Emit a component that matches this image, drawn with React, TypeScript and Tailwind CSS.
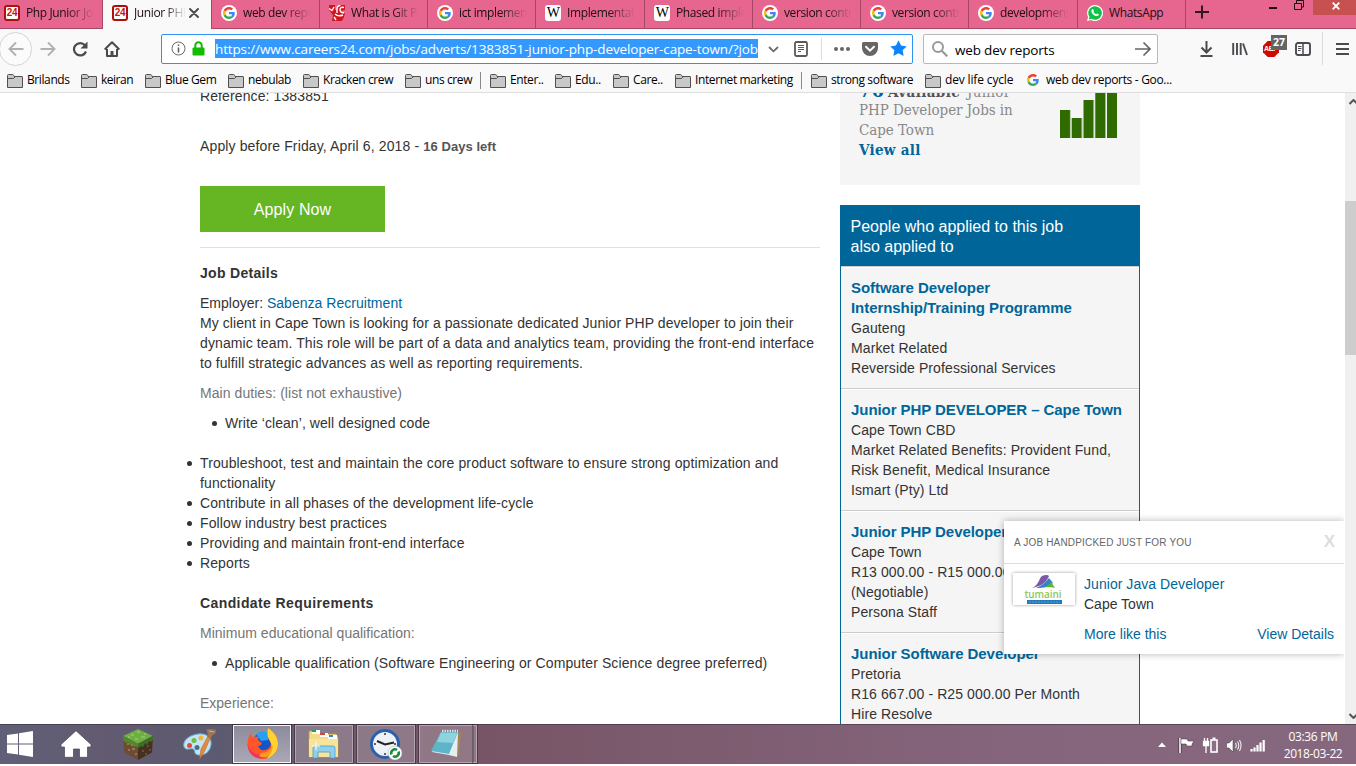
import React from "react";

const UI = "font-['Open_Sans','Noto_Sans',sans-serif]";
const ARIAL = "font-['Liberation_Sans',Arial,sans-serif]";
const SERIF = "font-['DejaVu_Serif_Condensed','DejaVu_Serif',serif]";

function GoogleG({ className }: { className: string }) {
  return (
    <svg className={className} viewBox="0 0 48 48">
      <path fill="#EA4335" d="M24 9.5c3.54 0 6.71 1.22 9.21 3.6l6.85-6.85C35.9 2.38 30.47 0 24 0 14.62 0 6.51 5.38 2.56 13.22l7.98 6.19C12.43 13.72 17.74 9.5 24 9.5z" />
      <path fill="#4285F4" d="M46.98 24.55c0-1.57-.15-3.09-.38-4.55H24v9.02h12.94c-.58 2.96-2.26 5.48-4.78 7.18l7.73 6c4.51-4.18 7.09-10.36 7.09-17.65z" />
      <path fill="#FBBC05" d="M10.53 28.59c-.48-1.45-.76-2.99-.76-4.59s.27-3.14.76-4.59l-7.98-6.19C.92 16.46 0 20.12 0 24c0 3.88.92 7.54 2.56 10.78l7.97-6.19z" />
      <path fill="#34A853" d="M24 48c6.48 0 11.93-2.13 15.89-5.81l-7.73-6c-2.15 1.45-4.92 2.3-8.16 2.3-6.26 0-11.57-4.22-13.47-9.91l-7.98 6.19C6.51 42.62 14.62 48 24 48z" />
    </svg>
  );
}

function TabIcon({ kind }: { kind: string }) {
  if (kind === "24")
    return (
      <span className={`flex h-4 w-4 shrink-0 items-center justify-center rounded-[3px] border-2 border-[#b0100c] bg-white text-[10px] leading-none font-bold tracking-[-0.3px] text-[#c8160f] ${ARIAL}`}>24</span>
    );
  if (kind === "g")
    return (
      <span className="flex h-4 w-4 shrink-0 items-center justify-center rounded-full bg-white">
        <GoogleG className="h-3 w-3" />
      </span>
    );
  if (kind === "w")
    return (
      <span className="flex h-4 w-4 shrink-0 items-center justify-center rounded-[3px] bg-white font-['Liberation_Serif',serif] text-[14px] leading-none tracking-[-0.5px] text-black">W</span>
    );
  if (kind === "git")
    return (
      <svg className="h-4 w-4 shrink-0" viewBox="0 0 16 16">
        <path d="M0 0h6v5h2V1l2-1h6v5l-4 1v2h4l-1 4-2 4H3l1-6-4-5z" fill="#d0161c" />
        <path d="M0 3.500l3 2L5 2M8 8V4.500Q8 .5 11.500.5M15 2.500q-4-1-4 2.500 1 3.500 4 2.500M6 9q3 3 8 1M5 12l2 3" stroke="#fff" strokeWidth="1.400" fill="none" />
      </svg>
    );
  return (
    <svg className="h-4 w-4 shrink-0" viewBox="0 0 16 16">
      <path d="M8 0a8 8 0 1 1-3.8 15L0 16l1.1-4A8 8 0 0 1 8 0z" fill="#fff" />
      <path d="M8 1.2a6.8 6.8 0 1 1-3.5 12.6l-2.7.6.7-2.6A6.8 6.8 0 0 1 8 1.2z" fill="#12c146" />
      <path d="M5.2 4.2c.6-.4 1-.2 1.200.3l.5 1.200c.1.500-.5.800-.5 1.100.6 1.200 1.500 1.900 2.700 2.400.4-.1.700-.9 1.100-.8l1.500.8c.2.700-.3 1.700-1.400 1.900C7.500 11.300 4.600 8.300 4.300 6.200c0-.9.400-1.600.9-2z" fill="#fff" />
    </svg>
  );
}

const tabs = [
  { k: "git", t: "What is Git Pu", w: "w-[108px]" },
  { k: "g", t: "ict implemen", w: "w-[108px]" },
  { k: "w", t: "Implementati", w: "w-[109px]" },
  { k: "w", t: "Phased imple", w: "w-[108px]" },
  { k: "g", t: "version contr", w: "w-[108px]" },
  { k: "g", t: "version contr", w: "w-[108px]" },
  { k: "g", t: "development", w: "w-[109px]" },
];

const fade = "[mask-image:linear-gradient(to_right,black_60%,transparent_100%)]";

function Tab({ k, t, w, noFade }: { k: string; t: string; w: string; noFade?: boolean }) {
  return (
    <div className={`flex h-[29px] shrink-0 items-center border-r border-b border-[#a64766] pb-[2px] pl-[9px] ${w}`}>
      <TabIcon kind={k} />
      <span className={`ml-[6px] w-[68px] overflow-hidden whitespace-nowrap ${noFade ? "" : fade}`}>{t}</span>
    </div>
  );
}

function TabStrip() {
  return (
    <div className="flex h-[29px] bg-[#e66690] text-[12px] tracking-[-0.38px] text-[#1c0d12]">
      <div className="flex h-[29px] w-[103px] shrink-0 items-center border-r border-b border-[#a64766] pb-[2px] pl-1">
        <TabIcon kind="24" />
        <span className={`ml-[6px] w-[68px] overflow-hidden whitespace-nowrap ${fade}`}>Php Junior Jobs</span>
      </div>
      <div className="flex h-[29px] w-[108px] shrink-0 items-center bg-[#f9f9fa] pb-[3px] pl-[9px]">
        <TabIcon kind="24" />
        <span className={`ml-[6px] w-[52px] overflow-hidden whitespace-nowrap ${fade}`}>Junior PHP D</span>
        <svg className="ml-[3px] h-[10px] w-[10px] shrink-0" viewBox="0 0 10 10">
          <path d="M1 1l8 8M9 1l-8 8" stroke="#4a4a4f" strokeWidth="1.9" strokeLinecap="round" />
        </svg>
      </div>
      <Tab k="g" t="web dev repo" w="w-[109px] border-l" />
      {tabs.map((t, i) => (
        <Tab key={i} {...t} />
      ))}
      <Tab k="wa" t="WhatsApp" w="w-[108px]" noFade />
      <div className="flex flex-1 items-start border-b border-[#a64766]">
        <svg className="mt-[5px] ml-[8px] h-[14px] w-[16px]" viewBox="0 0 16 14">
          <path d="M1 7h14M8 0.500v13" stroke="#2d1a21" strokeWidth="2" />
        </svg>
        <svg className="ml-[58px] h-4 w-[36px]" viewBox="0 0 36 16">
          <path d="M1 8h8" stroke="#1c0d12" strokeWidth="2" />
          <path d="M26.500 3.500h7v6h-7zM28.500 3V0.500h7v6.500h-2" fill="none" stroke="#1c0d12" />
        </svg>
        <div className="ml-auto flex h-[15px] w-[43px] items-center justify-center bg-[#c75050]">
          <svg className="mt-[-4px] ml-[3px] h-[8px] w-[8px]" viewBox="0 0 8 8">
            <path d="M0.700 0.700l6.600 6.600M7.300 0.700L0.700 7.300" stroke="#fff" strokeWidth="1.800" />
          </svg>
        </div>
      </div>
    </div>
  );
}

function NavBar() {
  return (
    <div className="flex h-[39px] shrink-0 items-center">
      <div className="-ml-[1px] flex h-[34px] w-[33px] shrink-0 items-center justify-center rounded-full border border-[#d4d4d6] bg-[#fbfbfc]">
        <svg className="h-4 w-4" viewBox="0 0 16 16"><path d="M15.500 8H1.500M8 1.500L1.500 8 8 14.500" fill="none" stroke="#b1b1b3" strokeWidth="1.900" /></svg>
      </div>
      <svg className="ml-[8px] h-4 w-4 shrink-0" viewBox="0 0 16 16"><path d="M.5 8h14M8 1.500L14.500 8 8 14.500" fill="none" stroke="#b1b1b3" strokeWidth="1.900" /></svg>
      <svg className="ml-[16px] h-4 w-4 shrink-0" viewBox="0 0 16 16"><path d="M13 4.300A6.200 6.200 0 1 0 14 10.500" fill="none" stroke="#4a4a4f" strokeWidth="2.200" /><path d="M15.500 0.500v7h-7z" fill="#4a4a4f" /></svg>
      <svg className="ml-[16px] h-4 w-4 shrink-0" viewBox="0 0 16 16"><path d="M.7 8.500L8 1.300l7.300 7.200M3 8v7h10V8" fill="none" stroke="#4a4a4f" strokeWidth="2" strokeLinejoin="round" /><path d="M6.500 15v-5h3v5z" fill="#4a4a4f" /></svg>

      <div className="ml-[41px] flex h-[30px] w-[752px] shrink-0 items-center rounded-[2px] border border-[#2f93f5] bg-white">
        <svg className="ml-[9px] h-[15px] w-[15px] shrink-0" viewBox="0 0 15 15"><circle cx="7.500" cy="7.500" r="6.500" fill="none" stroke="#6a6a6c" /><path d="M7.500 6.500v5M7.500 3.500v1.500" stroke="#5a5a5c" strokeWidth="1.500" /></svg>
        <svg className="ml-[6px] h-[15px] w-[13px] shrink-0" viewBox="0 0 13 15"><path d="M3.300 8V4.500a3.200 3.200 0 0 1 6.400 0V8" fill="none" stroke="#12bc00" strokeWidth="2" /><rect x="0.500" y="6.500" width="12" height="8" rx="1" fill="#12bc00" /></svg>
        <div className="ml-[10px] h-[19px] w-[543px] overflow-hidden bg-[#3399ff] text-[13.5px] leading-[21px] tracking-[-0.14px] whitespace-nowrap text-white">
          https://www.careers24.com/jobs/adverts/1383851-junior-php-developer-cape-town/?job
        </div>
        <svg className="ml-[10px] h-3 w-[11px] shrink-0" viewBox="0 0 11 12"><path d="M1 4l4.500 4.300L10 4" fill="none" stroke="#6b6b6d" strokeWidth="1.800" /></svg>
        <svg className="ml-[15px] h-4 w-[14px] shrink-0" viewBox="0 0 14 16"><rect x="1" y="1" width="12" height="14" rx="1.500" fill="none" stroke="#5a5a5c" strokeWidth="1.800" /><path d="M4 4.500h6M4 6.500h6M4 8.500h6M4 10.500h3" stroke="#5a5a5c" /></svg>
        <div className="ml-[13px] h-[22px] w-px bg-[#dcdcdc]" />
        <svg className="ml-[12px] h-4 w-4 shrink-0" viewBox="0 0 16 16"><circle cx="2" cy="8" r="2" fill="#666" /><circle cx="8" cy="8" r="2" fill="#666" /><circle cx="14" cy="8" r="2" fill="#666" /></svg>
        <svg className="ml-[12px] h-4 w-4 shrink-0" viewBox="0 0 16 16"><path d="M1.500 1h13A1.500 1.500 0 0 1 16 2.500V7A8 8 0 0 1 0 7V2.500A1.500 1.500 0 0 1 1.500 1z" fill="#666" /><path d="M4 5.800l4 3.900 4-3.900" fill="none" stroke="#fff" strokeWidth="2" strokeLinecap="round" /></svg>
        <svg className="ml-[12px] h-[17px] w-[17px] shrink-0" viewBox="0 0 16 16"><path d="M8 .3l2.400 4.900 5.300.8-3.800 3.700.9 5.400L8 12.500l-4.800 2.600.9-5.400L.3 6l5.300-.8z" fill="#0a84ff" /></svg>
      </div>

      <div className="ml-[10px] flex h-[30px] w-[235px] shrink-0 items-center rounded-[2px] border border-[#b8b8b8] bg-white">
        <svg className="ml-[8px] h-4 w-4 shrink-0" viewBox="0 0 16 16"><circle cx="6" cy="6" r="5" fill="none" stroke="#999" strokeWidth="2" /><path d="M9.500 9.500L15.300 15.300" stroke="#999" strokeWidth="2.200" /></svg>
        <span className="mt-[3px] ml-[7px] w-[180px] text-[13.5px] tracking-[-0.18px] whitespace-nowrap text-black">web dev reports</span>
        <svg className="h-4 w-4 shrink-0" viewBox="0 0 16 16"><path d="M0 8h15M8.500 1.500L15 8l-6.500 6.500" fill="none" stroke="#666" strokeWidth="1.700" /></svg>
      </div>

      <svg className="ml-[42px] h-4 w-[13px] shrink-0" viewBox="0 0 13 16"><path d="M6.500 0v11.500M1.500 6.500l5 5 5-5M.5 15h12" fill="none" stroke="#4a4a4f" strokeWidth="2" /></svg>
      <svg className="ml-[19px] h-4 w-4 shrink-0" viewBox="0 0 16 16"><path d="M1.200 2v12M5 2v12M8.700 2v12M11 2.500l4 11.500" stroke="#4a4a4f" strokeWidth="1.900" /></svg>
      <div className="relative ml-[15px] h-4 w-4 shrink-0">
        <svg className="h-4 w-4" viewBox="0 0 16 16"><path d="M4.700 0h6.600L16 4.700v6.600L11.300 16H4.700L0 11.300V4.700z" fill="#cc0a00" /></svg>
        <span className={`absolute top-[4px] left-[1px] text-[7px] leading-[8px] font-bold tracking-[-0.4px] text-white ${ARIAL}`}>ABP</span>
        <span className={`absolute -top-[6px] left-[8px] flex h-[15px] w-[16px] items-center justify-center bg-[#646464] text-[10.5px] leading-none font-bold text-white ${UI}`}>27</span>
      </div>
      <svg className="ml-[16px] h-[14px] w-4 shrink-0" viewBox="0 0 16 14"><rect x="1" y="1" width="14" height="12" rx="2" fill="none" stroke="#4a4a4f" strokeWidth="1.900" /><path d="M8 1v12" stroke="#4a4a4f" strokeWidth="1.500" /><path d="M3 4.500h3.500M3 6.500h3.500M3 8.500h2.500" stroke="#4a4a4f" /></svg>
      <div className="ml-[11px] h-[33px] w-px bg-[#dcdcdc]" />
      <svg className="ml-[13px] h-[14px] w-[13px] shrink-0" viewBox="0 0 13 14"><path d="M0 2h13M0 7h13M0 12h13" stroke="#4a4a4f" strokeWidth="2" /></svg>
    </div>
  );
}

function Bookmark({ t, w, g }: { t: string; w: string; g?: boolean }) {
  return (
    <div className={`flex shrink-0 items-center whitespace-nowrap ${w}`}>
      {g ? (
        <GoogleG className="mr-[7px] h-3 w-3 shrink-0" />
      ) : (
        <svg className="mt-px mr-[4px] h-[14px] w-4 shrink-0" viewBox="0 0 16 14">
          <path d="M.5 13.500V1.500Q.5.500 1.500.5h4q.8 0 1.200 1l.4 1h7.900q.5 0 .5.500v10.500z" fill="#c8c8c8" stroke="#505050" />
          <path d="M1 4.500h5.500l1.500-1.500" fill="none" stroke="#505050" />
        </svg>
      )}
      {t}
    </div>
  );
}

function Bookmarks() {
  return (
    <div className="flex h-[24px] items-center pl-[7px] text-[12px] tracking-[-0.4px] text-black">
      <Bookmark t="Brilands" w="w-[74px]" />
      <Bookmark t="keiran" w="w-[64px] tracking-[-0.5px]" />
      <Bookmark t="Blue Gem" w="w-[83px]" />
      <Bookmark t="nebulab" w="w-[75px]" />
      <Bookmark t="Kracken crew" w="w-[102px] tracking-[-0.4px]" />
      <Bookmark t="uns crew" w="w-[75px]" />
      <div className="mr-[9px] h-[17px] w-px bg-[#8a8a8a]" />
      <Bookmark t="Enter.." w="w-[65px]" />
      <Bookmark t="Edu.." w="w-[58px]" />
      <Bookmark t="Care.." w="w-[62px]" />
      <Bookmark t="Internet marketing" w="w-[126px]" />
      <div className="mr-[9px] h-[17px] w-px bg-[#8a8a8a]" />
      <Bookmark t="strong software" w="w-[114px]" />
      <Bookmark t="dev life cycle" w="w-[102px] tracking-[-0.15px]" />
      <Bookmark t="web dev reports - Goo..." w="w-[160px] tracking-[-0.32px]" g />
    </div>
  );
}

function Bullet({ children }: { children: React.ReactNode }) {
  return (
    <li className="flex">
      <span className="mt-[8px] mr-[8px] h-[5px] w-[5px] shrink-0 rounded-full bg-[#333]" />
      <span>{children}</span>
    </li>
  );
}

function Details() {
  return (
    <main className="-mt-[7px] w-[620px] shrink-0 leading-[20px] tracking-[0.11px]">
      <p>Reference: 1383851</p>
      <p className="mt-[30px] h-[20px] tracking-[0.13px]">
        Apply before Friday, April 6, 2018 - <b className="text-[13px] leading-[1] tracking-[0.05px] text-[#555]">16 Days left</b>
      </p>
      <div className="mt-[30px] flex h-[46px] w-[185px] items-center justify-center bg-[#66b523] pt-[2px] text-[16px] text-white">Apply Now</div>
      <div className="mt-[15px] h-px bg-[#e0e0e0]" />
      <h2 className="mt-[15px] font-bold tracking-[0.3px]">Job Details</h2>
      <p className="mt-[10px] tracking-normal">
        Employer: <span className="tracking-[0.03px] text-[#006699]">Sabenza Recruitment</span>
      </p>
      <p className="tracking-[0.075px] whitespace-nowrap">
        My client in Cape Town is looking for a passionate dedicated Junior PHP developer to join their<br />
        <span className="tracking-[0.105px]">dynamic team. This role will be part of a data and analytics team, providing the front-end interface</span><br />
        to fulfill strategic advances as well as reporting requirements.
      </p>
      <p className="mt-[10px] tracking-[0.06px] text-[#757575]">Main duties: (list not exhaustive)</p>
      <ul className="mt-[10px] ml-[12px] tracking-[0.07px]">
        <Bullet>Write ‘clean’, well designed code</Bullet>
      </ul>
      <ul className="mt-[20px] -ml-[13px] whitespace-nowrap">
        <Bullet>Troubleshoot, test and maintain the core product software to ensure strong optimization and<br />functionality</Bullet>
        <Bullet>Contribute in all phases of the development life-cycle</Bullet>
        <Bullet>Follow industry best practices</Bullet>
        <Bullet>Providing and maintain front-end interface</Bullet>
        <Bullet>Reports</Bullet>
      </ul>
      <h2 className="mt-[20px] font-bold tracking-[0.4px]">Candidate Requirements</h2>
      <p className="mt-[10px] tracking-[0.02px] text-[#757575]">Minimum educational qualification:</p>
      <ul className="mt-[10px] ml-[12px]">
        <Bullet>Applicable qualification (Software Engineering or Computer Science degree preferred)</Bullet>
      </ul>
      <p className="mt-[20px] tracking-normal text-[#757575]">Experience:</p>
    </main>
  );
}

const jobs = [
  { title: ["Software Developer", "Internship/Training Programme"], lines: ["Gauteng", "Market Related", "Reverside Professional Services"] },
  { title: ["Junior PHP DEVELOPER – Cape Town"], lines: ["Cape Town CBD", "Market Related Benefits: Provident Fund,", "Risk Benefit, Medical Insurance", "Ismart (Pty) Ltd"] },
  { title: ["Junior PHP Developer"], lines: ["Cape Town", "R13 000.00 - R15 000.00 Per Month", "(Negotiable)", "Persona Staff"] },
  { title: ["Junior Software Developer"], lines: ["Pretoria", "R16 667.00 - R25 000.00 Per Month", "Hire Resolve"] },
];

function Sidebar() {
  return (
    <aside className="ml-[20px] w-[300px] shrink-0 leading-[20px]">
      <div className="flex h-[92px] items-start overflow-hidden bg-[#f5f5f5]">
        <div className={`-mt-[13px] ml-[19px] w-[190px] text-[15px] tracking-[-0.05px] whitespace-nowrap text-[#888] ${SERIF}`}>
          <p className="flex h-[20px] items-baseline">
            <b className="w-[29px] text-[20px] leading-[20px] text-[#006699]">76</b> <b className="w-[79px] text-[15px] tracking-[0.4px] text-[#555]">Available</b> <span className="text-[15px] tracking-[0.3px]">Junior</span>
          </p>
          <p>PHP Developer Jobs in</p>
          <p>Cape Town</p>
          <p className="font-bold tracking-[0.3px] text-[#006699]">View all</p>
        </div>
        <svg className="ml-[11px] h-[45px] w-[57px]" viewBox="0 0 57 45">
          <path d="M0 17h10v28H0zM11.700 25h10v20h-10zM23.500 7h10v38h-10zM35.300 0h10v45h-10zM47 0h10v45h-10z" fill="#2f6b00" />
          <path d="M10.300 17v28M22 25v20M33.800 7v38M45.500 0v45" stroke="#8fb177" strokeWidth="0.700" />
        </svg>
      </div>
      <div className="mt-[20px] h-[61px] bg-[#006699] pt-[12px] pl-[10.5px] text-[16px] text-white">
        People who applied to this job<br />also applied to
      </div>
      <div className="border-x border-[#006699] bg-[#f5f5f5]">
        {jobs.map((j) => (
          <div key={j.title[0]} className="border-t border-[#ccc] whitespace-nowrap">
            <div className="h-[121px] border-t border-white pt-[10px] pl-[10px]">
              {j.title.map((t) => (
                <p key={t} className="text-[15px] font-bold tracking-[-0.06px] text-[#006699]">{t}</p>
              ))}
              {j.lines.map((t) => (
                <p key={t} className="tracking-[0.1px]">{t}</p>
              ))}
            </div>
          </div>
        ))}
      </div>
    </aside>
  );
}

function Popup() {
  return (
    <div className="absolute top-[428px] left-[1004px] h-[133px] w-[340px] bg-white leading-[20px] shadow-[0_0_7px_rgba(0,0,0,0.3)] [clip-path:inset(-8px_0_-8px_-8px)]">
      <div className="flex h-[43px] items-center justify-between border-b border-[#ddd] pr-[9px] pl-[10px]">
        <span className="mt-[2px] text-[10px] tracking-[0.18px] text-[#666]">A JOB HANDPICKED JUST FOR YOU</span>
        <span className="text-[17px] font-bold text-[#ddd]">X</span>
      </div>
      <div className="flex pt-[9px] pl-[9px]">
        <div className="flex h-[32px] w-[62px] shrink-0 justify-center bg-white shadow-[0_0_3px_rgba(0,0,0,0.4)]">
          <svg className="h-[32px] w-[40px]" viewBox="0 0 40 32">
            <path d="M8 15C15 12 15 5 18 3q5-2 7 0c-2 5-6 10-17 12z" fill="#7d58a8" />
            <path d="M12 15C20 12 22 8 25 5l4 5c-3 3-8 5-17 5z" fill="#2c86c8" />
            <path d="M18 15c6-2 8-4 9-6l4 6q-6-2-13 0z" fill="#63b22e" />
            <text x="19" y="25" textAnchor="middle" fontFamily="Open Sans" fontSize="10" fontWeight="600" fill="#92c45c" textLength="37">tumaini</text>
            <path d="M3 27h35v4H3z" fill="#2379bd" />
            <path d="M5 29h31" stroke="#5ba0d6" strokeDasharray="2 1" />
          </svg>
        </div>
        <div className="mt-px ml-[9px] flex-1 pr-[10px]">
          <p className="tracking-[0.05px] text-[#006699]">Junior Java Developer</p>
          <p>Cape Town</p>
          <p className="mt-[10px] flex justify-between text-[#006699]"><span>More like this</span><span>View Details</span></p>
        </div>
      </div>
    </div>
  );
}

function Scrollbar() {
  return (
    <div className="ml-auto flex w-[11px] shrink-0 flex-col overflow-hidden bg-[#f0f0f0]">
      <svg className="mt-[6px] ml-[4px] h-[6px] w-[9px] shrink-0" viewBox="0 0 9 6"><path d="M.5 5l4-4 4 4" fill="none" stroke="#555" strokeWidth="2" /></svg>
      <div className="mt-[96px] h-[154px] shrink-0 bg-[#cdcdcd]" />
      <svg className="mt-auto mb-[5px] ml-[4px] h-[6px] w-[9px] shrink-0" viewBox="0 0 9 6"><path d="M.5 1l4 4 4-4" fill="none" stroke="#555" strokeWidth="2" /></svg>
    </div>
  );
}

function TaskButton({ active, children }: { active?: boolean; children: React.ReactNode }) {
  return (
    <div className={`mr-[4px] flex h-[38px] w-[58px] shrink-0 items-center justify-center border shadow-[0_0_0_1px_rgba(45,35,50,0.55)] ${active ? "border-[#f4f4f6] bg-linear-to-b from-[#8e8b9b] to-[#aaa8b6]" : "border-[#b4a4b0] bg-white/20"}`}>{children}</div>
  );
}

function Taskbar() {
  return (
    <div className="flex h-[40px] shrink-0 items-center bg-[linear-gradient(to_right,#5f6077_0px,#635a70_110px,#5c5a71_220px,#6b5a6e_300px,#785566_480px,#7d5c70_700px,#85657c_1000px,#86687e_1356px)] shadow-[inset_0_1px_0_rgba(40,30,45,0.45)]">
      <svg className="ml-[7px] h-[26px] w-[26px] shrink-0" viewBox="0 0 26 26"><path d="M0 4L11 2.400V12.400H0zM12 2.200L26 0v12.400H12zM0 13.500h11v10L0 22zM12 13.500h14V26l-14-2.200z" fill="#fff" /></svg>
      <svg className="ml-[27px] h-[28px] w-[32px] shrink-0" viewBox="0 0 32 28"><path d="M16 .7L31 14.500V17h-3.500v10.300h-8V19h-6v8.300h-9V17H1v-2.500z" fill="#fff" stroke="#4b4455" strokeWidth="0.700" /></svg>
      <svg className="ml-[31px] h-[31px] w-[30px] shrink-0" viewBox="0 0 30 31">
        <path d="M15 0l15 7-15 8L0 7z" fill="#6fae45" />
        <path d="M0 7l15 8v16L1 23.500z" fill="#6d4c33" />
        <path d="M30 7l-15 8v16l14-7.500z" fill="#46301f" />
        <path d="M0 7l15 8v4l-2-2-2 1-2-3-2 1-2-3-2 1-3-3z" fill="#4e8a2c" />
        <path d="M30 7l-15 8v4l3-2 2 1 2-4 2 2 2-4 2 1 2-2z" fill="#3d6f24" />
        <path d="M8 6h3M14 3h3M18 8h4M12 10h3M21 5h2M5 8h2" stroke="#92cc62" strokeWidth="1.500" />
        <path d="M4 15h2M9 20h3M5 21h2M12 25h2M8 16h2" stroke="#9a7350" strokeWidth="2" />
        <path d="M19 22h2M24 17h2M22 25h2M26 21h2" stroke="#6d4c33" strokeWidth="2" />
      </svg>
      <svg className="ml-[30px] h-[32px] w-[34px] shrink-0" viewBox="0 0 34 32">
        <path d="M15 6c8-1 14 3 13 11-1 7-7 11-13 10-5-1-2-5-5-6-3-1-7 2-9-2C-1 12 7 7 15 6z" fill="#c3e4f5" stroke="#6ba9cf" />
        <circle cx="6.500" cy="17.500" r="2.500" fill="#e5493a" /><circle cx="11" cy="12.500" r="2.500" fill="#6cbf3f" /><circle cx="18" cy="10" r="2.500" fill="#f0b63a" /><circle cx="14" cy="19.500" r="2.500" fill="#4b6d8c" />
        <path d="M16.500 31.500L18 21l7-13 2.500 1.500-6 14z" fill="#e38a3b" stroke="#b15e20" strokeWidth="0.500" />
        <path d="M24.500 9l3 2 2-4q4-1 3.500-5-5-1.500-10-.5 2 2 1.500 7.500z" fill="#9b7458" />
        <path d="M26 3l5 1" stroke="#d3b295" />
      </svg>
      <div className="ml-[16px] flex">
        <TaskButton active>
          <svg className="h-[32px] w-[31px]" viewBox="0 0 31 32">
            <circle cx="16" cy="15" r="10.500" fill="#1257c9" />
            <path d="M9 6q6-5 13-1l-1 7-7 1z" fill="#2a9df4" />
            <path d="M4 5q0 3 2 4 3-1 6 0-2 2 0 4l3 2q-1 3-4 3 2 5 7 4 5-1 6-6-1-4-3-7-1-5 0-9c6 4 10 9 10 16 0 9-7 15-15.500 15S.5 25 .5 16C.5 11 2 8 4 5z" fill="#ff5528" />
            <path d="M21 0c6 4 10 9 10 16 0 7-5 13-11 14.500 4-6 6-11 3.500-16.500Q19 8 21 0z" fill="#ffd22e" />
            <path d="M.5 14c1 9 7 13 13 12.500 5 0 8-2 11-6C23 27 19 30 14 30.500 6 30 .5 24 .5 14z" fill="#f0306a" />
            <path d="M14 25q8 0 12-8 0 7-6 12-5 1-8-1z" fill="#ff9a1e" />
          </svg>
        </TaskButton>
        <TaskButton>
          <svg className="h-[30px] w-[34px]" viewBox="0 0 34 30">
            <path d="M2 2h9l2 3h16l2 3v20H2z" fill="#f2dc87" stroke="#b99a45" strokeWidth="0.800" />
            <path d="M5 1h8v4H5z" fill="#fff" /><path d="M5 1h4v2H5z" fill="#22a345" /><path d="M13 4h8v4h-8z" fill="#fff" /><path d="M13 4h5v2h-5z" fill="#d9432f" /><path d="M21 6h9v4h-9z" fill="#fff" /><path d="M22 6h4v2h-4z" fill="#3186d4" />
            <path d="M2 10h29v18H2z" fill="#f6e49a" />
            <path d="M6 29V19q0-2 2-2h18q2 0 2 2v10h-5v-6H11v6z" fill="#8fd0ec" stroke="#4f9cc2" strokeWidth="0.800" />
            <path d="M9 13v8M5 17h8" stroke="#fff" />
          </svg>
        </TaskButton>
        <TaskButton>
          <svg className="h-[32px] w-[34px]" viewBox="0 0 34 32">
            <circle cx="16" cy="16" r="13.500" fill="#eef2f6" stroke="#2860b0" strokeWidth="3" />
            <path d="M16 5v2M16 25v2M5 16h2M25 16h2" stroke="#333" strokeWidth="1.500" /><path d="M8 13l8 3.500 9-2" fill="none" stroke="#222" strokeWidth="2" />
            <circle cx="26" cy="25" r="7" fill="#fff" stroke="#9aa" strokeWidth="0.500" />
            <path d="M22.500 26.500a3.700 3.700 0 0 1 5.500-4.500M29.500 23.500a3.700 3.700 0 0 1-5.500 4.500" fill="none" stroke="#1b8a3a" strokeWidth="2.600" />
          </svg>
        </TaskButton>
        <div className="flex">
          <div className="flex h-[38px] w-[54px] shrink-0 items-center justify-center border border-[#b4a4b0] bg-white/20 shadow-[0_0_0_1px_rgba(45,35,50,0.55)]">
            <svg className="h-[30px] w-[32px]" viewBox="0 0 32 30">
              <path d="M27 3l4 1-2 22-8 2z" fill="#a4845c" /><path d="M11 3h17l-1 25-8-2-17-3z" fill="#e6eef0" /><path d="M11 3h17l-9 22-18-3z" fill="#5eb5c9" /><path d="M11 4h16l-4 10-16-1z" fill="#8fd3df" /><path d="M12 2h16" stroke="#ddd" strokeWidth="2.500" strokeDasharray="1.500 1" />
            </svg>
          </div>
          <div className="h-[38px] w-[4px] border border-l-0 border-[#b4a4b0] bg-white/20 shadow-[0_0_0_1px_rgba(45,35,50,0.55)]" />
        </div>
      </div>
      <svg className="mt-[2px] ml-auto h-[6px] w-[8px] shrink-0" viewBox="0 0 8 6"><path d="M0 5l4-4.500L8 5z" fill="#fff" /></svg>
      <svg className="mt-[2px] ml-[12px] h-[17px] w-[17px] shrink-0" viewBox="0 0 17 17"><path d="M2 1v15" stroke="#3d2f3a" strokeWidth="3" /><path d="M2 1v15" stroke="#fff" strokeWidth="1.600" /><path d="M3 2h6l1 2h6l-2 3v2h-5l-1-2H3z" fill="#fff" stroke="#3d2f3a" strokeWidth="0.500" /></svg>
      <svg className="mt-[2px] ml-[7px] h-[17px] w-[17px] shrink-0" viewBox="0 0 17 17"><path d="M1.500 4.500h5v4h-5zM2.500 1v3M5.500 1v3M4 8v8" fill="#fff" stroke="#fff" strokeWidth="1.300" /><rect x="9" y="3" width="6" height="12" fill="#8a7084" stroke="#fff" strokeWidth="1.600" /><path d="M10.500 1.500h3" stroke="#fff" strokeWidth="2" /></svg>
      <svg className="mt-[2px] ml-[7px] h-[15px] w-[16px] shrink-0" viewBox="0 0 16 15"><path d="M.5 5h2.500L7 1v13L3 10H.5z" fill="#fff" stroke="#3d2f3a" strokeWidth="0.500" /><path d="M9.500 5q1.500 2.500 0 5M11.500 3.500q2.500 4 0 8M13.500 2q3 5.500 0 11" fill="none" stroke="#eee" strokeWidth="1.100" /></svg>
      <svg className="mt-[2px] ml-[8px] h-[13px] w-[16px] shrink-0" viewBox="0 0 16 13"><path d="M1.500 10v2.500M4.500 8.500v4M7.500 6v6.500M10.500 3.500v9M13.700 1v11.500" stroke="#fff" strokeWidth="2.200" /></svg>
      <div className="mt-px mr-[13px] ml-[17px] w-[60px] text-center text-[12px] leading-[17px] tracking-[-0.35px] whitespace-nowrap text-white">
        <p>03:36 PM</p>
        <p className="tracking-[-0.4px]">2018-03-22</p>
      </div>
    </div>
  );
}

export default function App() {
  return (
    <div className={`flex h-[766px] w-[1356px] flex-col overflow-hidden bg-white ${UI}`}>
      <header className="h-[93px] shrink-0 border-b border-[#dedede] bg-[#f9f9fa]">
        <TabStrip />
        <NavBar />
        <Bookmarks />
      </header>
      <section className={`relative flex h-[631px] shrink-0 overflow-hidden bg-white pl-[200px] text-[14px] text-[#333] ${ARIAL}`}>
        <Details />
        <Sidebar />
        <Scrollbar />
        <Popup />
      </section>
      <Taskbar />
    </div>
  );
}
